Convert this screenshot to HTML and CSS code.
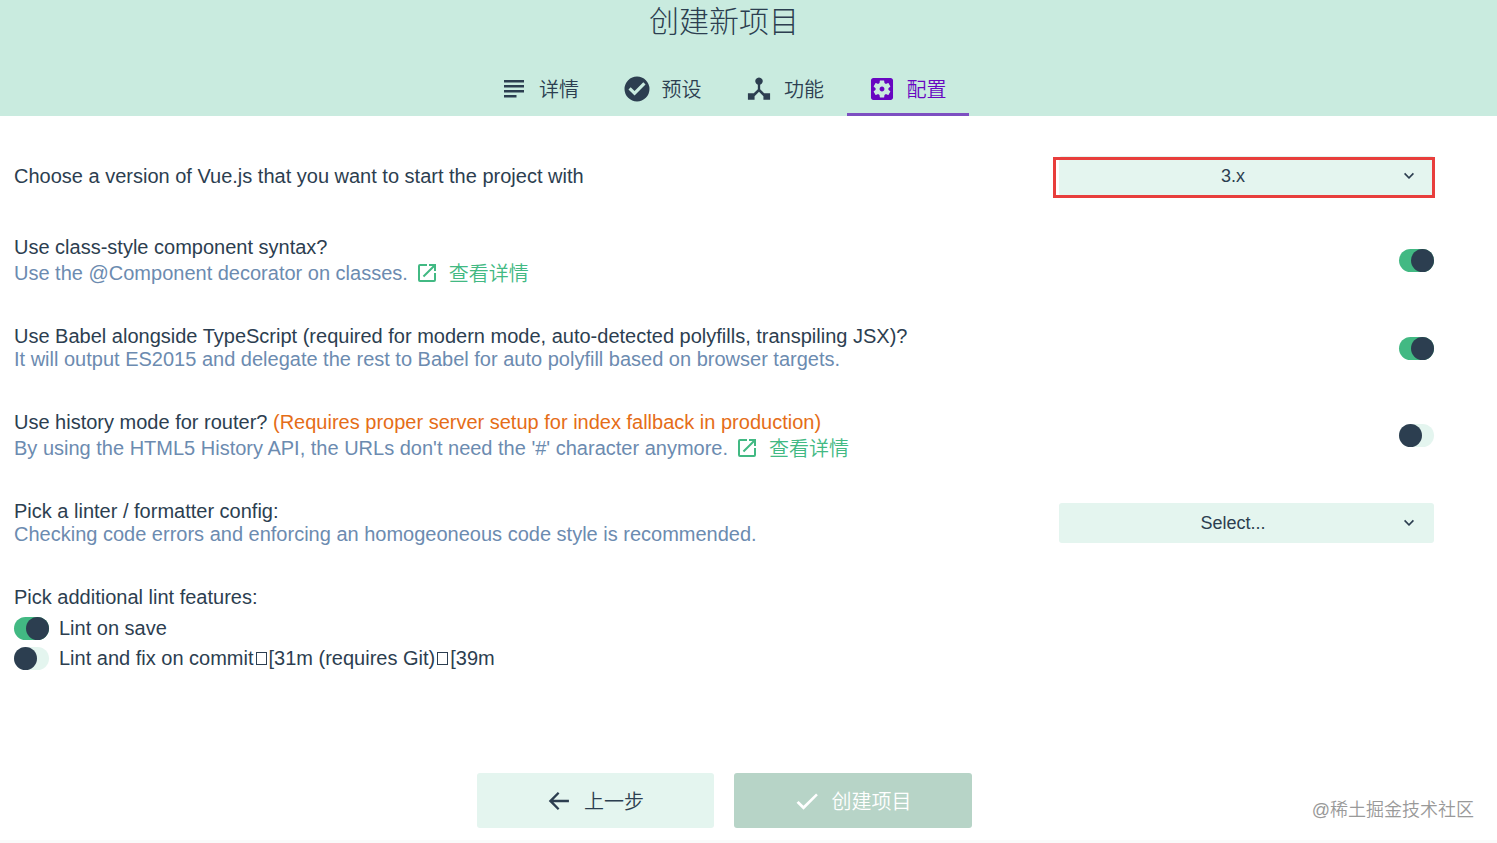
FILE: index.html
```html
<!DOCTYPE html>
<html lang="zh-CN">
  <head>
    <meta charset="UTF-8" />
    <meta name="viewport" content="width=device-width, initial-scale=1.0" />
    <title>创建新项目</title>
    <link rel="stylesheet" href="styles.css">
  </head>
  <body>
    <header class="header">
      <h1 class="title">创建新项目</h1>
      <nav class="tabs">
        <a class="tab">
          <svg class="icon" viewBox="0 0 28 28"><path d="M4 5h20v2.600H4zM4 10h20v2.600H4zM4 15h20v2.600H4zM4 20h12.500v2.600H4z"/></svg>
          <span>详情</span>
        </a>
        <a class="tab">
          <svg class="icon" viewBox="0 0 24 24"><path d="M12 1.300a10.700 10.700 0 1 0 0 21.400 10.700 10.700 0 0 0 0-21.400zM9.900 17.600l-5.200-5.200 1.900-1.900 3.300 3.300 7.500-7.500 1.900 1.900z"/></svg>
          <span>预设</span>
        </a>
        <a class="tab">
          <svg class="icon" viewBox="0 0 24 24"><path d="M16.500 15.700L13 12.300V8.300a3.200 3.200 0 1 0-2 0v4l-3.500 3.400H2.500v5.600h5.700v-3l3.800-3.900 3.800 3.900v3h5.700v-5.600z"/></svg>
          <span>功能</span>
        </a>
        <a class="tab active">
          <svg class="icon" viewBox="0 0 24 24"><path transform="translate(-.6 -.6) scale(1.05)" d="M12 10c-1.100 0-2 .9-2 2s.9 2 2 2 2-.9 2-2-.9-2-2-2zm7-7H5c-1.110 0-2 .9-2 2v14c0 1.100.89 2 2 2h14c1.110 0 2-.9 2-2V5c0-1.100-.89-2-2-2zm-1.750 9c0 .23-.02.46-.05.68l1.480 1.160c.13.11.17.3.08.45l-1.400 2.420c-.09.15-.27.21-.43.15l-1.740-.7c-.36.28-.76.51-1.180.69l-.26 1.850c-.03.17-.18.3-.35.3h-2.800c-.17 0-.32-.13-.35-.29l-.26-1.850c-.43-.18-.82-.41-1.180-.69l-1.740.7c-.16.06-.34 0-.43-.15l-1.400-2.420c-.09-.15-.05-.34.08-.45l1.480-1.160c-.03-.23-.05-.46-.05-.69s.02-.46.05-.68l-1.480-1.160c-.13-.11-.17-.3-.08-.45l1.400-2.420c.09-.15.27-.21.43-.15l1.740.7c.36-.28.76-.51 1.180-.69l.26-1.850c.03-.17.18-.3.35-.3h2.800c.17 0 .32.130.35.290l.26 1.850c.43.180.82.410 1.180.690l1.740-.7c.16-.06.34 0 .43.150l1.400 2.420c.09.150.05.340-.08.450l-1.480 1.160c.03.230.05.460.05.690z"/></svg>
          <span>配置</span>
        </a>
      </nav>
    </header>

    <main class="content">
      <div class="prompt first">
        <div class="message">Choose a version of Vue.js that you want to start the project with</div>
        <div class="select marked">
          <span class="value">3.x</span>
          <svg class="arrow" viewBox="0 0 24 24"><path d="M7.400 8.200L12 12.800l4.600-4.600L18 9.600l-6 6-6-6z"/></svg>
        </div>
      </div>

      <div class="prompt">
        <div class="text">
          <div class="message">Use class-style component syntax?</div>
          <div class="description with-link">
            <span>Use the @Component decorator on classes.</span>
            <a class="link">
              <svg class="open" viewBox="0 0 24 24"><path d="M19 19H5V5h7V3H5a2 2 0 0 0-2 2v14a2 2 0 0 0 2 2h14a2 2 0 0 0 2-2v-7h-2v7zM14 3v2h3.590l-9.830 9.830 1.410 1.410L19 6.410V10h2V3h-7z"/></svg>
              <span>查看详情</span>
            </a>
          </div>
        </div>
        <span class="switch on"></span>
      </div>

      <div class="prompt">
        <div>
          <div class="message">Use Babel alongside TypeScript (required for modern mode, auto-detected polyfills, transpiling JSX)?</div>
          <div class="description">It will output ES2015 and delegate the rest to Babel for auto polyfill based on browser targets.</div>
        </div>
        <span class="switch on"></span>
      </div>

      <div class="prompt">
        <div class="text">
          <div class="message">Use history mode for router? <span class="warning">(Requires proper server setup for index fallback in production)</span></div>
          <div class="description with-link">
            <span>By using the HTML5 History API, the URLs don't need the '#' character anymore.</span>
            <a class="link">
              <svg class="open" viewBox="0 0 24 24"><path d="M19 19H5V5h7V3H5a2 2 0 0 0-2 2v14a2 2 0 0 0 2 2h14a2 2 0 0 0 2-2v-7h-2v7zM14 3v2h3.590l-9.830 9.830 1.410 1.410L19 6.410V10h2V3h-7z"/></svg>
              <span>查看详情</span>
            </a>
          </div>
        </div>
        <span class="switch"></span>
      </div>

      <div class="prompt">
        <div>
          <div class="message">Pick a linter / formatter config:</div>
          <div class="description">Checking code errors and enforcing an homogeoneous code style is recommended.</div>
        </div>
        <div class="select">
          <span class="value">Select...</span>
          <svg class="arrow" viewBox="0 0 24 24"><path d="M7.400 8.200L12 12.800l4.600-4.600L18 9.600l-6 6-6-6z"/></svg>
        </div>
      </div>

      <div class="features">
        <div class="message">Pick additional lint features:</div>
        <div class="feature">
          <span class="switch on"></span>
          <span>Lint on save</span>
        </div>
        <div class="feature">
          <span class="switch"></span>
          <span>Lint and fix on commit<i class="missing"></i>[31m (requires Git)<i class="missing"></i>[39m</span>
        </div>
      </div>
    </main>

    <footer class="actions">
      <button class="button">
        <svg class="icon" viewBox="0 0 24 24"><path d="M20.500 10.900H7.200l5.200-5.300L11 4.200 3.200 12l7.800 7.800 1.400-1.400-5.200-5.300h13.300z"/></svg>
        <span>上一步</span>
      </button>
      <button class="button primary">
        <svg class="icon" viewBox="0 0 24 24"><path d="M9 16.170L4.830 12l-1.800 1.500L9 19.400 21.300 7l-1.500-1.500z"/></svg>
        <span>创建项目</span>
      </button>
    </footer>

    <div class="watermark">@稀土掘金技术社区</div>
  </body>
</html>
```
FILE: styles.css
```css
:root {
  --dark: #2c3e50;
  --green: #42b983;
  --light: #e4f5ef;
  --purple: #6806c1;
}

*,
*::before,
*::after {
  box-sizing: border-box;
}

body {
  margin: 0;
  height: 843px;
  display: flex;
  flex-direction: column;
  overflow: hidden;
  background: #fff;
  color: var(--dark);
  font-family: "Liberation Sans", "Noto Sans CJK SC", sans-serif;
  font-size: 20px;
  font-weight: 350;
  line-height: 23px;
}

svg {
  fill: currentColor;
  flex: none;
}

.header {
  height: 116px;
  padding-right: 49px;
  background: #c9ebdf;
}

.title {
  margin: 0;
  height: 62px;
  font-size: 30px;
  font-weight: 300;
  line-height: 44px;
  text-align: center;
}

.tabs {
  display: flex;
  justify-content: center;
}

.tab {
  display: flex;
  align-items: center;
  gap: 11px;
  width: 122.5px;
  height: 54px;
  padding: 2px 0 0 21px;
  border-bottom: 3px solid transparent;
}

.tab span {
  padding-top: 4px;
}

.tab.active {
  color: var(--purple);
  border-color: #7d4fc1;
}

.icon {
  width: 28px;
  height: 28px;
}

.content {
  height: 640px;
  padding: 20px 63px 0 14px;
}

.prompt {
  display: flex;
  align-items: center;
  justify-content: space-between;
  height: 87.5px;
}

.prompt.first {
  height: 80px;
  margin-bottom: 1px;
}

.text {
  padding-top: 2px;
}

.description {
  color: #6c8bb0;
}

.with-link {
  display: flex;
  align-items: center;
  height: 29px;
}

.link {
  display: flex;
  align-items: center;
  gap: 10px;
  margin-left: 7px;
  color: var(--green);
}

.link span {
  padding-top: 2px;
}

.open {
  width: 24px;
  height: 24px;
}

.warning {
  color: #e56d17;
}

.select {
  display: flex;
  align-items: center;
  position: relative;
  width: 375px;
  height: 40px;
  padding: 0 15px 0 8px;
  border-radius: 3px;
  background: var(--light);
  font-size: 18px;
}

.value {
  flex: 1;
  text-align: center;
}

.arrow {
  width: 20px;
  height: 20px;
}

/* red frame round the selected version */
.marked::after {
  content: "";
  position: absolute;
  top: 1px;
  left: -6px;
  width: 382px;
  height: 41px;
  border: 3px solid #e83e3c;
}

.switch {
  flex: none;
  display: flex;
  width: 35px;
  height: 23px;
  border-radius: 12px;
  background: var(--light);
}

.switch::before {
  content: "";
  width: 23px;
  height: 23px;
  border-radius: 50%;
  background: var(--dark);
}

.switch.on {
  justify-content: flex-end;
  background: var(--green);
}

.features {
  padding-top: 19px;
}

.feature {
  display: flex;
  align-items: center;
  gap: 10px;
  height: 30px;
}

.features .message {
  margin-bottom: 4px;
}

.missing {
  display: inline-block;
  width: 11px;
  height: 13px;
  margin: 0 2px;
  border: 1px solid var(--dark);
}

.actions {
  display: flex;
  justify-content: center;
  gap: 20px;
  height: 84px;
  margin-top: auto;
  padding: 14px 48px 0 0;
  border-bottom: 3px solid #fafafa;
}

.button {
  display: flex;
  align-items: center;
  justify-content: center;
  gap: 11px;
  width: 237px;
  height: 55px;
  padding: 0 2px 0 0;
  border: none;
  border-radius: 3px;
  background: var(--light);
  color: var(--dark);
  font: inherit;
}

.button span {
  padding-top: 3px;
}

.button.primary {
  width: 238px;
  background: #b7d4c7;
  color: #fff;
}

.watermark {
  position: absolute;
  right: 23px;
  bottom: 21px;
  color: #999;
  font-size: 18px;
}
```
